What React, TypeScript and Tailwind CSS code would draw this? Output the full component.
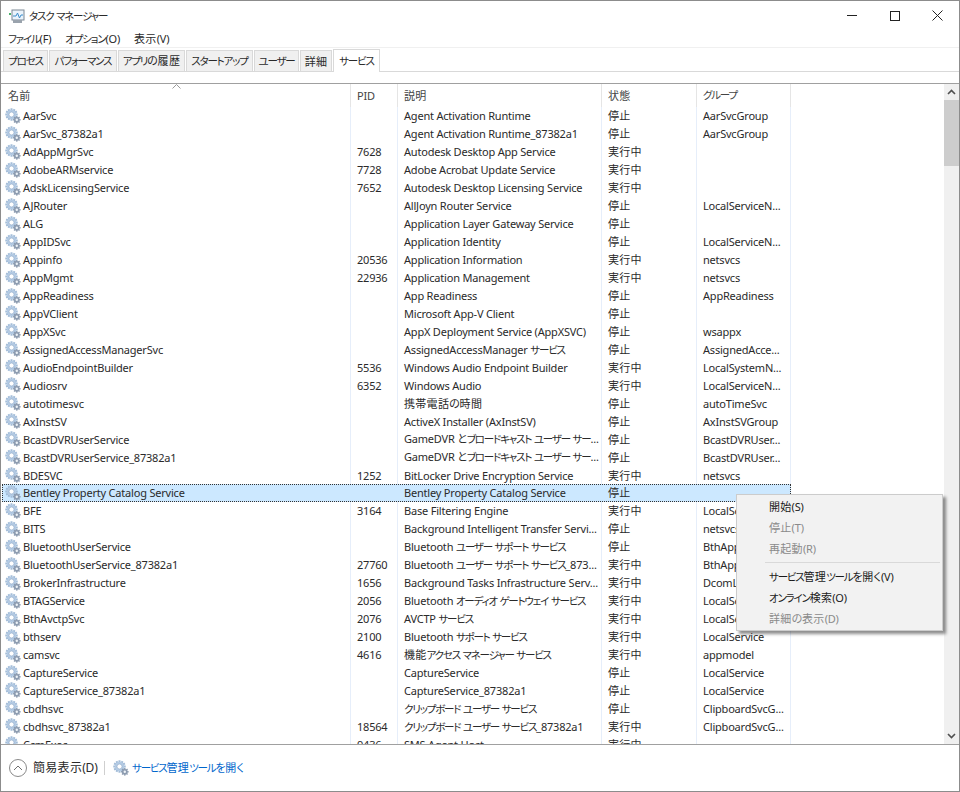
import React from "react";

const FONT = "font-['Noto_Sans','Noto_Sans_CJK_JP',sans-serif] [font-feature-settings:'palt']";

function T({ children }: { children: string }) {
  const parts = children.split(/([\u30a0-\u30ff]+|[\u4e00-\u9fff]+)/).filter(Boolean);
  return (
    <>
      {parts.map((p, i) =>
        /^[\u30a0-\u30ff]/.test(p) ? (
          <span key={i} className="text-[10.5px] tracking-[-1.2px]">{p}</span>
        ) : /^[\u4e00-\u9fff]/.test(p) ? (
          <span key={i} className="tracking-[0.3px]">{p}</span>
        ) : (
          <span key={i}>{p}</span>
        )
      )}
    </>
  );
}

function Gear({ className = "" }: { className?: string }) {
  const teeth = (cx: number, cy: number, r: number, n: number, w: number, c: string) =>
    Array.from({ length: n }).map((_, i) => (
      <rect key={i} x={cx - w / 2} y={cy - r} width={w} height={r * 2} transform={`rotate(${(i * 180) / n} ${cx} ${cy})`} fill={c} />
    ));
  return (
    <svg viewBox="0 0 16 16" width="16" height="16" className={className}>
      {teeth(6.5, 6.5, 6.2, 6, 2, "#9fb9d6")}
      <circle cx="6.5" cy="6.5" r="4.7" fill="#b4cbe4" />
      <circle cx="6.5" cy="6.5" r="2.5" fill="#ffffff" stroke="#8ba6c6" strokeWidth="0.6" />
      {teeth(11.8, 11.8, 3.9, 4, 1.3, "#8d9cb0")}
      <circle cx="11.8" cy="11.8" r="2.9" fill="#8d9cb0" />
      <circle cx="11.8" cy="11.8" r="1.2" fill="#eef3f8" />
    </svg>
  );
}

type Row = [string, string, string, string, string];
const rows: Row[] = [
  ["AarSvc", "", "Agent Activation Runtime", "停止", "AarSvcGroup"],
  ["AarSvc_87382a1", "", "Agent Activation Runtime_87382a1", "停止", "AarSvcGroup"],
  ["AdAppMgrSvc", "7628", "Autodesk Desktop App Service", "実行中", ""],
  ["AdobeARMservice", "7728", "Adobe Acrobat Update Service", "実行中", ""],
  ["AdskLicensingService", "7652", "Autodesk Desktop Licensing Service", "実行中", ""],
  ["AJRouter", "", "AllJoyn Router Service", "停止", "LocalServiceN..."],
  ["ALG", "", "Application Layer Gateway Service", "停止", ""],
  ["AppIDSvc", "", "Application Identity", "停止", "LocalServiceN..."],
  ["Appinfo", "20536", "Application Information", "実行中", "netsvcs"],
  ["AppMgmt", "22936", "Application Management", "実行中", "netsvcs"],
  ["AppReadiness", "", "App Readiness", "停止", "AppReadiness"],
  ["AppVClient", "", "Microsoft App-V Client", "停止", ""],
  ["AppXSvc", "", "AppX Deployment Service (AppXSVC)", "停止", "wsappx"],
  ["AssignedAccessManagerSvc", "", "AssignedAccessManager サービス", "停止", "AssignedAcce..."],
  ["AudioEndpointBuilder", "5536", "Windows Audio Endpoint Builder", "実行中", "LocalSystemN..."],
  ["Audiosrv", "6352", "Windows Audio", "実行中", "LocalServiceN..."],
  ["autotimesvc", "", "携帯電話の時間", "停止", "autoTimeSvc"],
  ["AxInstSV", "", "ActiveX Installer (AxInstSV)", "停止", "AxInstSVGroup"],
  ["BcastDVRUserService", "", "GameDVR とブロードキャスト ユーザー サー...", "停止", "BcastDVRUser..."],
  ["BcastDVRUserService_87382a1", "", "GameDVR とブロードキャスト ユーザー サー...", "停止", "BcastDVRUser..."],
  ["BDESVC", "1252", "BitLocker Drive Encryption Service", "実行中", "netsvcs"],
  ["Bentley Property Catalog Service", "", "Bentley Property Catalog Service", "停止", ""],
  ["BFE", "3164", "Base Filtering Engine", "実行中", "LocalServiceN..."],
  ["BITS", "", "Background Intelligent Transfer Servi...", "停止", "netsvcs"],
  ["BluetoothUserService", "", "Bluetooth ユーザー サポート サービス", "停止", "BthAppGroup"],
  ["BluetoothUserService_87382a1", "27760", "Bluetooth ユーザー サポート サービス_873...", "実行中", "BthAppGroup"],
  ["BrokerInfrastructure", "1656", "Background Tasks Infrastructure Serv...", "実行中", "DcomLaunch"],
  ["BTAGService", "2056", "Bluetooth オーディオ ゲートウェイ サービス", "実行中", "LocalServiceN..."],
  ["BthAvctpSvc", "2076", "AVCTP サービス", "実行中", "LocalServiceN..."],
  ["bthserv", "2100", "Bluetooth サポート サービス", "実行中", "LocalService"],
  ["camsvc", "4616", "機能アクセス マネージャー サービス", "実行中", "appmodel"],
  ["CaptureService", "", "CaptureService", "停止", "LocalService"],
  ["CaptureService_87382a1", "", "CaptureService_87382a1", "停止", "LocalService"],
  ["cbdhsvc", "", "クリップボード ユーザー サービス", "停止", "ClipboardSvcG..."],
  ["cbdhsvc_87382a1", "18564", "クリップボード ユーザー サービス_87382a1", "実行中", "ClipboardSvcG..."],
  ["CcmExec", "9436", "SMS Agent Host", "実行中", ""],
];

const tabs: [string, string][] = [
  ["プロセス", "w-[45px]"],
  ["パフォーマンス", "w-[68px]"],
  ["アプリの履歴", "w-[67px]"],
  ["スタートアップ", "w-[67px]"],
  ["ユーザー", "w-[45px]"],
  ["詳細", "w-[32px]"],
];

function MenuItem({ label, disabled }: { label: string; disabled?: boolean }) {
  return (
    <div className={`h-[21px] pl-[32px] flex items-center ${disabled ? "text-[#8a8a8a]" : "text-[#1a1a1a]"}`}>
      <span><T>{label}</T></span>
    </div>
  );
}

export default function App() {
  return (
    <div className={`${FONT} w-[960px] h-[792px] bg-white border border-[#8c8c8c] flex flex-col overflow-hidden text-[11px] tracking-[-0.2px] leading-none text-[#2a2a2a] relative`}>
      {/* title bar */}
      <div className="h-[29px] flex items-center shrink-0">
        <svg viewBox="0 0 16 16" width="16" height="16" className="ml-[8px]">
          <rect x="3" y="2" width="12" height="10" fill="#eaf3fb" stroke="#7b8794" />
          <path d="M4 8 L7 8 L8.5 5 L10.5 10 L12 7 L14 7" fill="none" stroke="#3d8ecb" strokeWidth="1" />
          <rect x="0" y="5" width="2" height="2" fill="#49b06b" />
          <rect x="4" y="12" width="9" height="3" fill="#9aa3ad" />
        </svg>
        <span className="ml-[4px]"><T>タスク マネージャー</T></span>
        <div className="ml-auto flex items-center h-full">
          <div className="w-[43px] h-full flex items-center justify-center">
            <div className="w-[10px] h-px bg-[#222]" />
          </div>
          <div className="w-[43px] h-full flex items-center justify-center">
            <div className="w-[10px] h-[10px] border border-[#222]" />
          </div>
          <div className="w-[43px] h-full flex items-center justify-center">
            <svg width="11" height="11" viewBox="0 0 11 11"><path d="M0.5 0.5L10.5 10.5M10.5 0.5L0.5 10.5" stroke="#222" strokeWidth="1" /></svg>
          </div>
        </div>
      </div>
      {/* menu */}
      <div className="h-[17px] flex items-center gap-[14px] pl-[7px] shrink-0">
        <span><T>ファイル(F)</T></span>
        <span><T>オプション(O)</T></span>
        <span><T>表示(V)</T></span>
      </div>
      {/* tabs */}
      <div className="h-[25px] border-t border-b border-t-[#f0f0f0] border-b-[#d9d9d9] flex items-end pl-[2px] gap-[1px] shrink-0">
        {tabs.map(([t, w]) => (
          <div key={t} className={`${w} h-[21px] bg-[#f0f0f0] border border-b-0 border-[#d9d9d9] flex items-center justify-center whitespace-nowrap`}>
            <span><T>{t}</T></span>
          </div>
        ))}
        <div className="w-[47px] h-[23px] -mb-px bg-white border border-b-0 border-[#d9d9d9] flex items-center justify-center whitespace-nowrap">
          <span><T>サービス</T></span>
        </div>
      </div>
      <div className="h-[11px] shrink-0" />
      {/* table + scrollbar */}
      <div className="flex-1 min-h-0 border-t border-b border-[#a0a0a0] flex relative">
        <div className="flex-1 min-w-0 overflow-hidden">
          <div className="h-[23px] flex items-center text-[#444] relative">
            <svg width="9" height="5" viewBox="0 0 9 5" className="absolute left-[171px] top-0"><path d="M0.5 4.5L4.5 0.5L8.5 4.5" fill="none" stroke="#9a9a9a" /></svg>
            <div className="w-[350px] pl-[7px] pb-px h-full flex items-center border-r border-[#e5e5e5]"><T>名前</T></div>
            <div className="w-[47px] pl-[6px] pb-px h-full flex items-center border-r border-[#e5e5e5]">PID</div>
            <div className="w-[204px] pl-[6px] pb-px h-full flex items-center border-r border-[#e5e5e5]"><T>説明</T></div>
            <div className="w-[95px] pl-[6px] pb-px h-full flex items-center border-r border-[#e5e5e5]"><T>状態</T></div>
            <div className="w-[94px] pl-[6px] pb-px h-full flex items-center border-r border-[#e5e5e5]"><span><T>グループ</T></span></div>
          </div>
          {rows.map((r) => {
            const sel = r[0].startsWith("Bentley");
            const b = sel ? "border-transparent" : "border-[#e6eefa]";
            return (
              <div key={r[0]} className="h-[17.96px] flex items-center whitespace-nowrap relative">
                {sel && <div className="absolute left-[1px] top-0 w-[789px] h-[18px] bg-[#cce8ff] border border-dotted border-[#333]" />}
                <div className={`relative w-[350px] h-full flex items-center pl-[4px] border-r ${b}`}>
                  <Gear />
                  <span className="ml-[2px]">{r[0]}</span>
                </div>
                <div className={`relative w-[47px] h-full flex items-center pl-[6px] border-r ${b}`}>{r[1]}</div>
                <div className={`relative w-[204px] h-full flex items-center pl-[6px] border-r ${b}`}><span><T>{r[2]}</T></span></div>
                <div className={`relative w-[95px] h-full flex items-center pl-[6px] border-r ${b}`}><span><T>{r[3]}</T></span></div>
                <div className={`relative w-[94px] h-full flex items-center pl-[6px] border-r ${b}`}>{r[4]}</div>
              </div>
            );
          })}
        </div>
        <div className="w-[15px] bg-[#f0f0f0] flex flex-col shrink-0">
          <div className="h-[16px] flex items-center justify-center">
            <svg width="9" height="6" viewBox="0 0 9 6"><path d="M1 5L4.5 1.5L8 5" fill="none" stroke="#505050" strokeWidth="1.6" /></svg>
          </div>
          <div className="h-[66px] bg-[#cdcdcd]" />
          <div className="flex-1" />
          <div className="h-[16px] flex items-center justify-center">
            <svg width="9" height="6" viewBox="0 0 9 6"><path d="M1 1L4.5 4.5L8 1" fill="none" stroke="#505050" strokeWidth="1.6" /></svg>
          </div>
        </div>
      </div>
      {/* footer */}
      <div className="h-[46px] flex items-center shrink-0">
        <div className="ml-[8px] w-[18px] h-[18px] rounded-full border border-[#8a8a8a] flex items-center justify-center">
          <svg width="10" height="6" viewBox="0 0 10 6"><path d="M1 5L5 1L9 5" fill="none" stroke="#707070" strokeWidth="1" /></svg>
        </div>
        <span className="ml-[6px] w-[65px] whitespace-nowrap text-[12px]"><T>簡易表示(D)</T></span>
        <div className="ml-[6px] w-px h-[14px] bg-[#cfcfcf]" />
        <Gear className="ml-[8px]" />
        <span className="ml-[3px] text-[#0066cc]"><T>サービス管理ツールを開く</T></span>
      </div>
      {/* context menu */}
      <div className="absolute left-[735px] top-[493px] w-[207px] h-[137px] bg-[#f2f2f2] border border-[#cccccc] shadow-[3px_3px_3px_rgba(0,0,0,0.45)] pt-[1px] text-[#1a1a1a]">
        <MenuItem label="開始(S)" />
        <MenuItem label="停止(T)" disabled />
        <MenuItem label="再起動(R)" disabled />
        <div className="mr-[2px] ml-[28px] my-[3px] h-px bg-[#d9d9d9]" />
        <MenuItem label="サービス管理ツールを開く(V)" />
        <MenuItem label="オンライン検索(O)" />
        <MenuItem label="詳細の表示(D)" disabled />
      </div>
    </div>
  );
}
